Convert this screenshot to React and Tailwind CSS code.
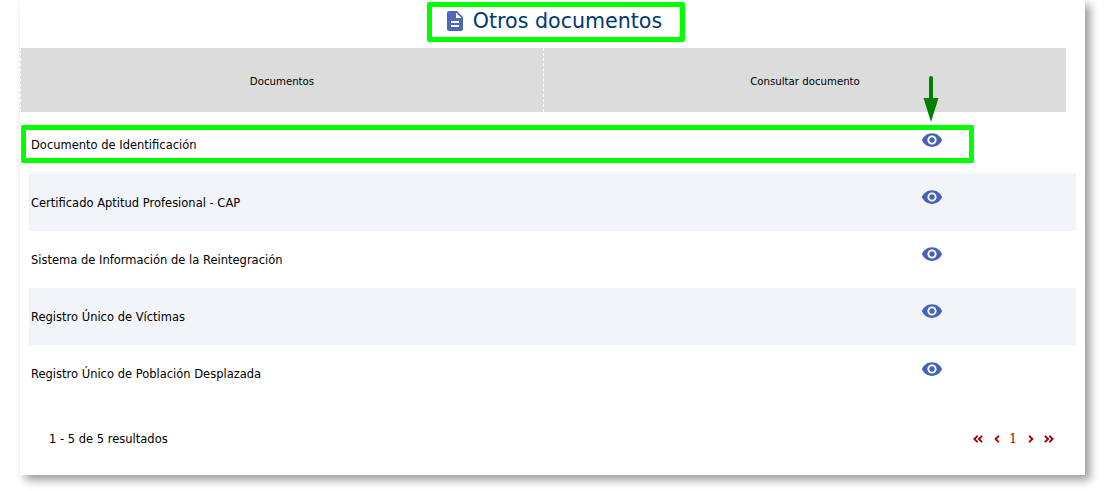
import React from "react";
import { MdDescription, MdVisibility } from "react-icons/md";
import { FaAngleDoubleLeft, FaAngleDoubleRight, FaAngleLeft, FaAngleRight } from "react-icons/fa";

const DOCUMENTS = [
  "Documento de Identificación",
  "Certificado Aptitud Profesional - CAP",
  "Sistema de Información de la Reintegración",
  "Registro Único de Víctimas",
  "Registro Único de Población Desplazada",
];

function DocumentRow({ name, striped }) {
  return (
    <div className={`flex h-[57.25px] items-center ${striped ? "bg-[#f1f4f9]" : "bg-white"}`}>
      <span className="ml-[2px] mt-[2.5px] w-[889.5px] text-[11.5px] text-black">{name}</span>
      <MdVisibility className="mb-[10px] h-[22px] w-[22px] text-[#4762b2]" aria-hidden />
    </div>
  );
}

export default function App() {
  return (
    <div className="h-[491px] w-[1106px] overflow-hidden bg-white font-['DejaVu_Sans',sans-serif]">
      <div className="relative ml-[20px] h-[475px] w-[1065px] bg-white shadow-[5px_5px_9px_rgba(0,0,0,0.4)]">
        <div className="flex h-[48px] items-start justify-center pt-[7px]">
          <MdDescription className="mr-[6px] mt-[2px] h-[24px] w-[24px] text-[#4d68b8]" aria-hidden />
          <h1 className="mt-px text-[20.6px] leading-[26px] font-normal text-[#003a70]">Otros documentos</h1>
        </div>

        <div className="flex h-[64px] w-[1046px] border-l border-dashed border-white bg-[#dcdcdc] pt-[3px] text-[10.2px] text-black">
          <div className="flex flex-1 items-center justify-center">Documentos</div>
          <div className="-mt-[3px] w-0 border-r border-dashed border-white" />
          <div className="flex flex-1 items-center justify-center">Consultar documento</div>
        </div>

        <div className="ml-[9px] mt-[4px] w-[1047px]">
          {DOCUMENTS.map((name, i) => (
            <DocumentRow key={name} name={name} striped={i % 2 === 1} />
          ))}
        </div>

        <div className="mt-[28px] flex items-center justify-between pl-[29px] pr-[30px]">
          <span className="text-[11.5px] text-black">1 - 5 de 5 resultados</span>
          <div className="flex items-center text-[#a50000]">
            <FaAngleDoubleLeft className="h-[12px] w-[12px]" aria-hidden />
            <FaAngleLeft className="ml-[7px] h-[12px] w-[12px]" aria-hidden />
            <span className="ml-[6px] font-['DejaVu_Serif',serif] text-[12px]">1</span>
            <FaAngleRight className="ml-[8px] h-[12px] w-[12px]" aria-hidden />
            <FaAngleDoubleRight className="ml-[6px] h-[12px] w-[12px]" aria-hidden />
          </div>
        </div>

        {/* annotations drawn over the capture */}
        <div className="absolute left-[407px] top-[2px] h-[40px] w-[258px] rounded-[2px] border-[5px] border-[#00ff00]" />
        <div className="absolute left-[1px] top-[125px] h-[38px] w-[953px] rounded-[2px] border-[5px] border-[#00ff00]" />
        <svg className="absolute left-[902px] top-[75px]" width="18" height="48" viewBox="0 0 18 48" aria-hidden>
          <path d="M9 3v22" stroke="#008000" strokeWidth="4" strokeLinecap="round" fill="none" />
          <path d="M1.5 23h15L9 47z" fill="#008000" />
        </svg>
      </div>
    </div>
  );
}
